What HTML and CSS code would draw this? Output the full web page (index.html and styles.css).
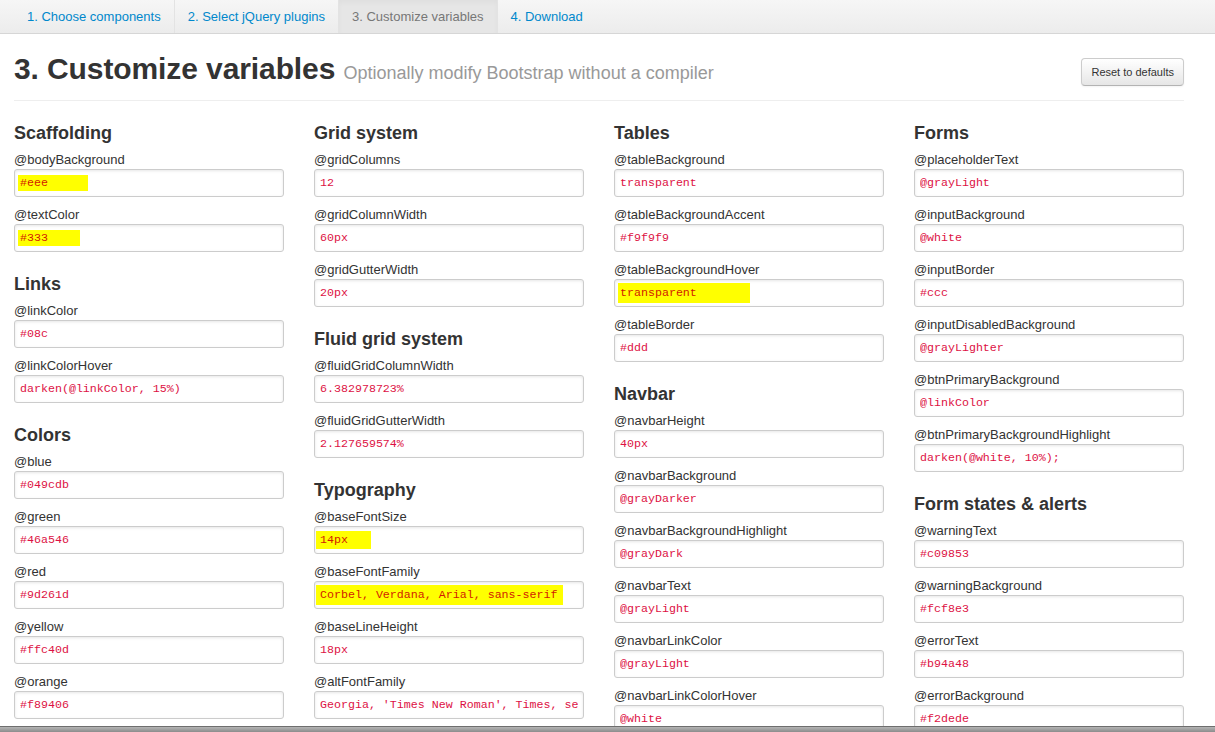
FILE: index.html
```html
<!DOCTYPE html>
<html lang="en">
<head>
<meta charset="utf-8">
<title>Customize variables</title>
<link rel="stylesheet" href="styles.css">
</head>
<body>
<div class="page">
  <nav class="subnav">
    <ul class="tabs">
      <li><a href="#components">1. Choose components</a></li>
      <li><a href="#plugins">2. Select jQuery plugins</a></li>
      <li class="active"><a href="#variables">3. Customize variables</a></li>
      <li><a href="#download">4. Download</a></li>
    </ul>
  </nav>
  <main class="main">
    <div class="container">
      <header class="page-header">
        <h1>3. Customize variables <small>Optionally modify Bootstrap without a compiler</small></h1>
        <button class="btn" type="button">Reset to defaults</button>
      </header>
      <div class="vars">
        <section class="col">
          <h3>Scaffolding</h3>
          <label>@bodyBackground</label>
          <div class="field"><span class="hl" style="width:70px">#eee</span></div>
          <label>@textColor</label>
          <div class="field"><span class="hl" style="width:62px">#333</span></div>
          <h3>Links</h3>
          <label>@linkColor</label>
          <div class="field"><span class="val">#08c</span></div>
          <label>@linkColorHover</label>
          <div class="field"><span class="val">darken(@linkColor, 15%)</span></div>
          <h3>Colors</h3>
          <label>@blue</label>
          <div class="field"><span class="val">#049cdb</span></div>
          <label>@green</label>
          <div class="field"><span class="val">#46a546</span></div>
          <label>@red</label>
          <div class="field"><span class="val">#9d261d</span></div>
          <label>@yellow</label>
          <div class="field"><span class="val">#ffc40d</span></div>
          <label>@orange</label>
          <div class="field"><span class="val">#f89406</span></div>
        </section>
        <section class="col">
          <h3>Grid system</h3>
          <label>@gridColumns</label>
          <div class="field"><span class="val">12</span></div>
          <label>@gridColumnWidth</label>
          <div class="field"><span class="val">60px</span></div>
          <label>@gridGutterWidth</label>
          <div class="field"><span class="val">20px</span></div>
          <h3>Fluid grid system</h3>
          <label>@fluidGridColumnWidth</label>
          <div class="field"><span class="val">6.382978723%</span></div>
          <label>@fluidGridGutterWidth</label>
          <div class="field"><span class="val">2.127659574%</span></div>
          <h3>Typography</h3>
          <label>@baseFontSize</label>
          <div class="field"><span class="hl hl-left hl-tall" style="width:55px">14px</span></div>
          <label>@baseFontFamily</label>
          <div class="field"><span class="hl hl-left hl-big" style="width:247px">Corbel, Verdana, Arial, sans-serif</span></div>
          <label>@baseLineHeight</label>
          <div class="field"><span class="val">18px</span></div>
          <label>@altFontFamily</label>
          <div class="field"><span class="val">Georgia, 'Times New Roman', Times, serif</span></div>
        </section>
        <section class="col">
          <h3>Tables</h3>
          <label>@tableBackground</label>
          <div class="field"><span class="val">transparent</span></div>
          <label>@tableBackgroundAccent</label>
          <div class="field"><span class="val">#f9f9f9</span></div>
          <label>@tableBackgroundHover</label>
          <div class="field"><span class="hl hl-big" style="width:132px">transparent</span></div>
          <label>@tableBorder</label>
          <div class="field"><span class="val">#ddd</span></div>
          <h3>Navbar</h3>
          <label>@navbarHeight</label>
          <div class="field"><span class="val">40px</span></div>
          <label>@navbarBackground</label>
          <div class="field"><span class="val">@grayDarker</span></div>
          <label>@navbarBackgroundHighlight</label>
          <div class="field"><span class="val">@grayDark</span></div>
          <label>@navbarText</label>
          <div class="field"><span class="val">@grayLight</span></div>
          <label>@navbarLinkColor</label>
          <div class="field"><span class="val">@grayLight</span></div>
          <label>@navbarLinkColorHover</label>
          <div class="field"><span class="val">@white</span></div>
        </section>
        <section class="col">
          <h3>Forms</h3>
          <label>@placeholderText</label>
          <div class="field"><span class="val">@grayLight</span></div>
          <label>@inputBackground</label>
          <div class="field"><span class="val">@white</span></div>
          <label>@inputBorder</label>
          <div class="field"><span class="val">#ccc</span></div>
          <label>@inputDisabledBackground</label>
          <div class="field"><span class="val">@grayLighter</span></div>
          <label>@btnPrimaryBackground</label>
          <div class="field"><span class="val">@linkColor</span></div>
          <label>@btnPrimaryBackgroundHighlight</label>
          <div class="field"><span class="val">darken(@white, 10%);</span></div>
          <h3>Form states &amp; alerts</h3>
          <label>@warningText</label>
          <div class="field"><span class="val">#c09853</span></div>
          <label>@warningBackground</label>
          <div class="field"><span class="val">#fcf8e3</span></div>
          <label>@errorText</label>
          <div class="field"><span class="val">#b94a48</span></div>
          <label>@errorBackground</label>
          <div class="field"><span class="val">#f2dede</span></div>
        </section>
      </div>
    </div>
  </main>
  <div class="taskbar"></div>
</div>
</body>
</html>
```
FILE: styles.css
```css
html, body {
  margin: 0;
  padding: 0;
  background: #fff;
}

body {
  font-family: "Liberation Sans", Arial, sans-serif;
  font-size: 13px;
  line-height: 18px;
  color: #333;
}

.page {
  height: 100vh;
  display: flex;
  flex-direction: column;
  overflow: hidden;
}

/* ---------- sub navigation ---------- */
.subnav {
  flex: none;
  height: 33px;
  background: linear-gradient(#f6f6f6, #ececec);
  border-bottom: 1px solid #d6d6d6;
  padding-left: 14px;
}

.tabs {
  display: flex;
  margin: 0;
  padding: 0;
  list-style: none;
  height: 33px;
}

.tabs li {
  display: flex;
  border-right: 1px solid #e3e3e3;
}

.tabs li:last-child {
  border-right: 0;
}

.tabs a {
  display: block;
  padding: 0 13px;
  line-height: 33px;
  font-size: 13px;
  color: #0088cc;
  text-decoration: none;
}

.tabs li.active {
  background: #e6e6e6;
  box-shadow: inset 0 3px 5px rgba(0, 0, 0, 0.03);
}

.tabs li.active a {
  color: #777;
}

/* ---------- main ---------- */
.main {
  flex: 1;
  overflow: hidden;
}

.container {
  width: 1170px;
  margin-left: 14px;
}

.page-header {
  display: flex;
  justify-content: space-between;
  align-items: flex-start;
  margin-top: 17px;
  padding-bottom: 13px;
  border-bottom: 1px solid #eee;
}

.page-header h1 {
  margin: 0;
  font-size: 30px;
  line-height: 36px;
  height: 36px;
  font-weight: bold;
  color: #333;
  white-space: nowrap;
  letter-spacing: -0.1px;
}

.page-header h1 small {
  font-size: 18px;
  line-height: 0;
  font-weight: normal;
  color: #999;
  letter-spacing: 0;
}

.btn {
  margin-top: 7px;
  height: 28px;
  padding: 0 9px;
  font-family: "Liberation Sans", Arial, sans-serif;
  font-size: 11px;
  line-height: 16px;
  color: #333;
  background: linear-gradient(#ffffff, #e6e6e6);
  border: 1px solid #cccccc;
  border-bottom-color: #b3b3b3;
  border-radius: 4px;
  box-shadow: inset 0 1px 0 rgba(255, 255, 255, 0.2), 0 1px 2px rgba(0, 0, 0, 0.05);
  cursor: pointer;
}

/* ---------- variable columns ---------- */
.vars {
  display: grid;
  grid-template-columns: repeat(4, 270px);
  column-gap: 30px;
  padding-top: 9px;
}

.col {
  display: flex;
  flex-direction: column;
  min-width: 0;
}

.col h3 {
  margin: 10px 0 4px;
  font-size: 18px;
  line-height: 27px;
  font-weight: bold;
  color: #333;
}

.col label {
  display: block;
  font-size: 13px;
  line-height: 18px;
  color: #333;
}

.field {
  box-sizing: border-box;
  height: 28px;
  width: 270px;
  margin-bottom: 9px;
  padding: 0 5px;
  display: flex;
  align-items: center;
  border: 1px solid #cccccc;
  border-radius: 3px;
  background: #fff;
  box-shadow: inset 0 1px 3px rgba(0, 0, 0, 0.1);
  font-family: "Liberation Mono", "Courier New", monospace;
  font-size: 11.65px;
  color: #dd1144;
  white-space: nowrap;
  overflow: hidden;
}

.val {
  flex: 1 1 auto;
  min-width: 0;
  overflow: hidden;
  white-space: nowrap;
}

.hl {
  display: inline-block;
  flex: none;
  box-sizing: border-box;
  height: 16px;
  line-height: 16px;
  margin-left: -2px;
  padding-left: 2px;
  background: #ffff00;
  color: #d21a00;
}

.hl-left {
  margin-left: -4px;
  padding-left: 4px;
}

.hl-tall {
  height: 18px;
  line-height: 18px;
}

.hl-big {
  height: 20px;
  line-height: 20px;
}

/* ---------- window edge ---------- */
.taskbar {
  flex: none;
  height: 5px;
  border-top: 1px solid #6e6e6e;
  background: linear-gradient(#b4b4b4, #8c8c8c);
}
```
